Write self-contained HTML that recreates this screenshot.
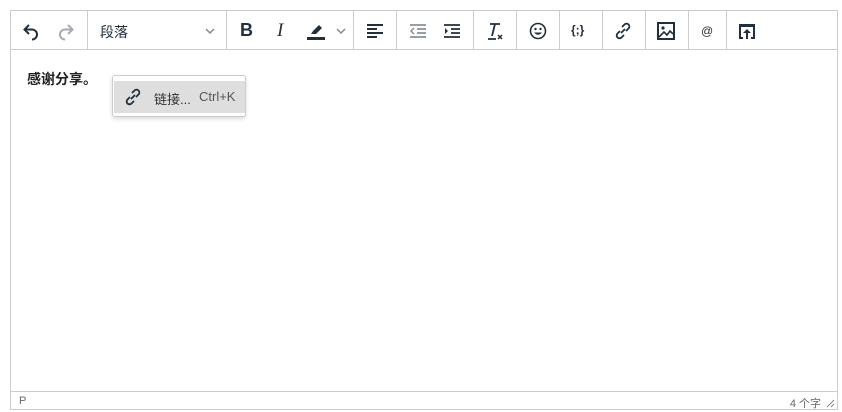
<!DOCTYPE html>
<html><head><meta charset="utf-8"><style>
*{margin:0;padding:0;box-sizing:border-box}
body{width:842px;height:412px;background:#fff;font-family:"Liberation Sans","Noto Sans CJK SC",sans-serif;position:relative;overflow:hidden}
.ed{position:absolute;left:10px;top:10px;width:828px;height:400px;border:1px solid #ccc}
.tb{position:absolute;left:0;top:0;width:826px;height:39px;border-bottom:1px solid #ccc}
.sep{position:absolute;top:0;width:1px;height:39px;background:#ccc}
.ic{position:absolute;top:10px;width:20px;height:20px}
svg{display:block}
.st{position:absolute;left:0;bottom:0;width:826px;height:18px;border-top:1px solid #ccc;font-size:11px;color:#666}
.menu{position:absolute;left:112px;top:75px;width:134px;height:42px;background:#fff;border:1px solid #ccc;border-radius:3px;box-shadow:0 2px 4px rgba(0,0,0,.15)}
.mi{position:absolute;left:1px;top:5px;width:131px;height:32px;background:#dedede;font-size:13px;color:#333}
</style></head><body>
<div class="ed">
<div class="tb">
<div class="sep" style="left:76px"></div>
<div class="sep" style="left:215px"></div>
<div class="sep" style="left:342px"></div>
<div class="sep" style="left:385px"></div>
<div class="sep" style="left:462px"></div>
<div class="sep" style="left:505px"></div>
<div class="sep" style="left:548px"></div>
<div class="sep" style="left:591px"></div>
<div class="sep" style="left:634px"></div>
<div class="sep" style="left:677px"></div>
<div class="sep" style="left:715px"></div>
<div class="ic" style="left:10px"><svg width="20" height="20" viewBox="0 0 20 20"><path d="M8 4 L3.5 8.5 L8 13 M3.5 8.5 H11 a5 5 0 0 1 0 10" fill="none" stroke="#222f3e" stroke-width="2"/></svg></div>
<div class="ic" style="left:45px"><svg width="20" height="20" viewBox="0 0 20 20"><path d="M12 4 L16.5 8.5 L12 13 M16.5 8.5 H9 a5 5 0 0 0 0 10" fill="none" stroke="#a6abb2" stroke-width="2"/></svg></div>
<div style="position:absolute;left:89px;top:11px;font-size:14px;color:#222f3e">段落</div>
<div class="ic" style="left:189px"><svg width="20" height="20"><path d="M6 8 L10 12 L14 8" fill="none" stroke="#888" stroke-width="1.5"/></svg></div>
<div style="position:absolute;left:229px;top:9px;font-size:18px;font-weight:bold;color:#222f3e">B</div>
<div style="position:absolute;left:266px;top:9px;font-size:19px;font-style:italic;font-family:'Liberation Serif',serif;color:#222f3e">I</div>
<div class="ic" style="left:295px"><svg width="20" height="20"><path d="M5 13 L7 10 L13 4 L16 7 L10 13 Z" fill="#222f3e"/><rect x="1" y="16" width="18" height="3" fill="#222f3e"/></svg></div>
<div class="ic" style="left:320px"><svg width="20" height="20"><path d="M6 8 L10 12 L14 8" fill="none" stroke="#888" stroke-width="1.5"/></svg></div>
<div class="ic" style="left:354px"><svg width="20" height="20"><path d="M2 4h16M2 8h10M2 12h16M2 16h10" stroke="#222f3e" stroke-width="2"/></svg></div>
<div class="ic" style="left:397px"><svg width="20" height="20"><path d="M2 4h16M9 8h9M9 12h9M2 16h16" stroke="#8a9099" stroke-width="1.8"/><path d="M6 7 L3 10 L6 13" fill="none" stroke="#8a9099" stroke-width="1.5"/></svg></div>
<div class="ic" style="left:431px"><svg width="20" height="20"><path d="M2 4h16M9 8h9M9 12h9M2 16h16" stroke="#222f3e" stroke-width="1.8"/><path d="M3 7 L6 10 L3 13Z" fill="#222f3e"/></svg></div>
<div class="ic" style="left:473px"><svg width="20" height="20"><path d="M6 3h10M11 3 L8 15M4 18h8" stroke="#222f3e" stroke-width="1.8" fill="none"/><path d="M14 14l4 4M18 14l-4 4" stroke="#222f3e" stroke-width="1.5"/></svg></div>
<div class="ic" style="left:517px"><svg width="20" height="20"><circle cx="10" cy="10" r="7.5" fill="none" stroke="#222f3e" stroke-width="1.6"/><circle cx="7.5" cy="8" r="1.2" fill="#222f3e"/><circle cx="12.5" cy="8" r="1.2" fill="#222f3e"/><path d="M6 11.5 Q10 16 14 11.5Z" fill="#222f3e"/></svg></div>
<div style="position:absolute;left:560px;top:12px;font-size:12px;font-weight:bold;color:#222f3e">{;}</div>
<div class="ic" style="left:602px"><svg width="20" height="20" viewBox="0 0 20 20"><path d="M8 12 l4-4 M9 6 l2.5-2.5 a2.6 2.6 0 0 1 4 4 l-2.5 2.5 M11 14 l-2.5 2.5 a2.6 2.6 0 0 1 -4 -4 l2.5 -2.5" fill="none" stroke="#222f3e" stroke-width="1.8"/></svg></div>
<div class="ic" style="left:645px"><svg width="20" height="20"><rect x="2" y="2" width="16" height="16" fill="none" stroke="#222f3e" stroke-width="2"/><circle cx="7" cy="7" r="1.6" fill="#222f3e"/><path d="M3 16 L8 11 L11 14 L14 10 L17 13" fill="none" stroke="#222f3e" stroke-width="1.6"/></svg></div>
<div style="position:absolute;left:690px;top:13px;font-size:12px;color:#222f3e">@</div>
<div class="ic" style="left:726px"><svg width="20" height="20"><path d="M2 3h16v15h-4v-2h2V6H4v10h2v2H2Z" fill="#222f3e"/><path d="M10 8 L6 12h3v6h2v-6h3Z" fill="#222f3e"/></svg></div>
</div>
<div style="position:absolute;left:16px;top:58px;font-size:14px;font-weight:bold;color:#222">感谢分享。</div>
<div class="st"><span style="position:absolute;left:8px;top:3px">P</span><span style="position:absolute;right:16px;top:3px">4 个字</span>
<svg style="position:absolute;right:2px;top:6px" width="10" height="10"><path d="M9 2 L2 9 M9 6 L6 9" stroke="#888" stroke-width="1"/></svg></div>
</div>
<div class="menu"><div class="mi">
<svg style="position:absolute;left:9px;top:6px" width="20" height="20" viewBox="0 0 20 20"><path d="M8 12 l4-4 M9 6 l2.5-2.5 a2.6 2.6 0 0 1 4 4 l-2.5 2.5 M11 14 l-2.5 2.5 a2.6 2.6 0 0 1 -4 -4 l2.5 -2.5" fill="none" stroke="#222f3e" stroke-width="1.8"/></svg>
<span style="position:absolute;left:40px;top:8px">链接...</span><span style="position:absolute;left:85px;top:8px;color:#555">Ctrl+K</span>
</div></div>
</body></html>
